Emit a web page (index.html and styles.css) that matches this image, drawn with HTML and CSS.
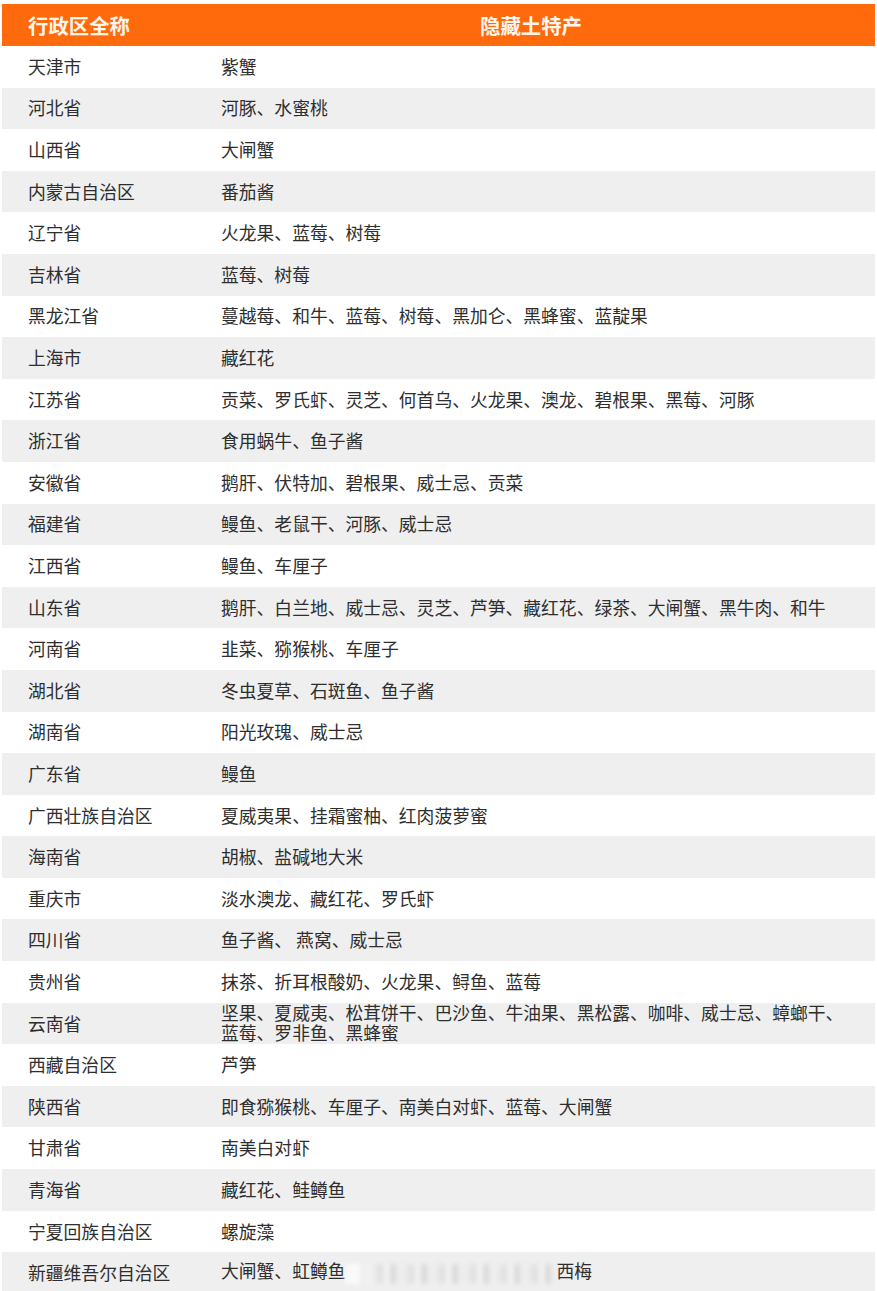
FILE: index.html
```html
<!DOCTYPE html>
<html lang="zh-CN">
<head>
<meta charset="utf-8">
<title>隐藏土特产</title>
<link rel="stylesheet" href="styles.css">
</head>
<body>
<div class="table">
  <div class="head">
    <div class="hc c1">行政区全称</div>
    <div class="hc c2">隐藏土特产</div>
  </div>
  <div class="row"><div class="c1">天津市</div><div class="c2">紫蟹</div></div>
  <div class="row"><div class="c1">河北省</div><div class="c2">河豚、水蜜桃</div></div>
  <div class="row"><div class="c1">山西省</div><div class="c2">大闸蟹</div></div>
  <div class="row"><div class="c1">内蒙古自治区</div><div class="c2">番茄酱</div></div>
  <div class="row"><div class="c1">辽宁省</div><div class="c2">火龙果、蓝莓、树莓</div></div>
  <div class="row"><div class="c1">吉林省</div><div class="c2">蓝莓、树莓</div></div>
  <div class="row"><div class="c1">黑龙江省</div><div class="c2">蔓越莓、和牛、蓝莓、树莓、黑加仑、黑蜂蜜、蓝靛果</div></div>
  <div class="row"><div class="c1">上海市</div><div class="c2">藏红花</div></div>
  <div class="row"><div class="c1">江苏省</div><div class="c2">贡菜、罗氏虾、灵芝、何首乌、火龙果、澳龙、碧根果、黑莓、河豚</div></div>
  <div class="row"><div class="c1">浙江省</div><div class="c2">食用蜗牛、鱼子酱</div></div>
  <div class="row"><div class="c1">安徽省</div><div class="c2">鹅肝、伏特加、碧根果、威士忌、贡菜</div></div>
  <div class="row"><div class="c1">福建省</div><div class="c2">鳗鱼、老鼠干、河豚、威士忌</div></div>
  <div class="row"><div class="c1">江西省</div><div class="c2">鳗鱼、车厘子</div></div>
  <div class="row"><div class="c1">山东省</div><div class="c2">鹅肝、白兰地、威士忌、灵芝、芦笋、藏红花、绿茶、大闸蟹、黑牛肉、和牛</div></div>
  <div class="row"><div class="c1">河南省</div><div class="c2">韭菜、猕猴桃、车厘子</div></div>
  <div class="row"><div class="c1">湖北省</div><div class="c2">冬虫夏草、石斑鱼、鱼子酱</div></div>
  <div class="row"><div class="c1">湖南省</div><div class="c2">阳光玫瑰、威士忌</div></div>
  <div class="row"><div class="c1">广东省</div><div class="c2">鳗鱼</div></div>
  <div class="row"><div class="c1">广西壮族自治区</div><div class="c2">夏威夷果、挂霜蜜柚、红肉菠萝蜜</div></div>
  <div class="row"><div class="c1">海南省</div><div class="c2">胡椒、盐碱地大米</div></div>
  <div class="row"><div class="c1">重庆市</div><div class="c2">淡水澳龙、藏红花、罗氏虾</div></div>
  <div class="row"><div class="c1">四川省</div><div class="c2">鱼子酱、 燕窝、威士忌</div></div>
  <div class="row"><div class="c1">贵州省</div><div class="c2">抹茶、折耳根酸奶、火龙果、鲟鱼、蓝莓</div></div>
  <div class="row"><div class="c1">云南省</div><div class="c2 two"><span class="ln">坚果、夏威夷、松茸饼干、巴沙鱼、牛油果、黑松露、咖啡、威士忌、蟑螂干、</span><span class="ln">蓝莓、罗非鱼、黑蜂蜜</span></div></div>
  <div class="row"><div class="c1">西藏自治区</div><div class="c2">芦笋</div></div>
  <div class="row"><div class="c1">陕西省</div><div class="c2">即食猕猴桃、车厘子、南美白对虾、蓝莓、大闸蟹</div></div>
  <div class="row"><div class="c1">甘肃省</div><div class="c2">南美白对虾</div></div>
  <div class="row"><div class="c1">青海省</div><div class="c2">藏红花、鲑鳟鱼</div></div>
  <div class="row"><div class="c1">宁夏回族自治区</div><div class="c2">螺旋藻</div></div>
  <div class="row"><div class="c1">新疆维吾尔自治区</div><div class="c2">大闸蟹、虹鳟鱼<span class="smudge"></span>西梅</div></div>
</div>
</body>
</html>
```

FILE: styles.css
```css
html, body {
  margin: 0;
  padding: 0;
  background: #ffffff;
}

body {
  font-family: "Noto Sans CJK SC", "Noto Sans", sans-serif;
  color: #2e2e2e;
  overflow: hidden;
}

.table {
  margin: 4px 2px 0 2px;
  display: flex;
  flex-direction: column;
}

.head {
  display: grid;
  grid-template-columns: 219px 1fr;
  height: 42px;
  align-items: center;
  background: #ff6a0d;
  color: #fff6ec;
  font-weight: 700;
  font-size: 20.4px;
  line-height: 1;
}

.head .c1 {
  padding-left: 26px;
}

.head .c2 {
  padding-left: 259px;
}

.row {
  display: grid;
  grid-template-columns: 219px 1fr;
  height: 41.6px;
  align-items: center;
  font-size: 17.8px;
  line-height: 1;
}

.row:nth-of-type(odd) {
  background: #efefef;
}

.row .c1 {
  padding-left: 26px;
  white-space: nowrap;
}

.row .c2 {
  white-space: nowrap;
}

.row .c2.two {
  display: flex;
  flex-direction: column;
  gap: 2px;
  position: relative;
  top: -1px;
}

.row .c2.two .ln {
  display: block;
  height: 18px;
  line-height: 18px;
}

.smudge {
  display: inline-block;
  width: 211px;
  height: 20px;
  vertical-align: middle;
  background: linear-gradient(90deg, rgba(255,255,255,0.9) 0 12px, rgba(255,255,255,0) 30px),
    repeating-linear-gradient(90deg, #e0e0e0 0 8px, #f3f3f3 8px 14px, #d6d6d6 14px 20px, #ededed 20px 31px);
  filter: blur(2px);
  opacity: 0.8;
}
```
